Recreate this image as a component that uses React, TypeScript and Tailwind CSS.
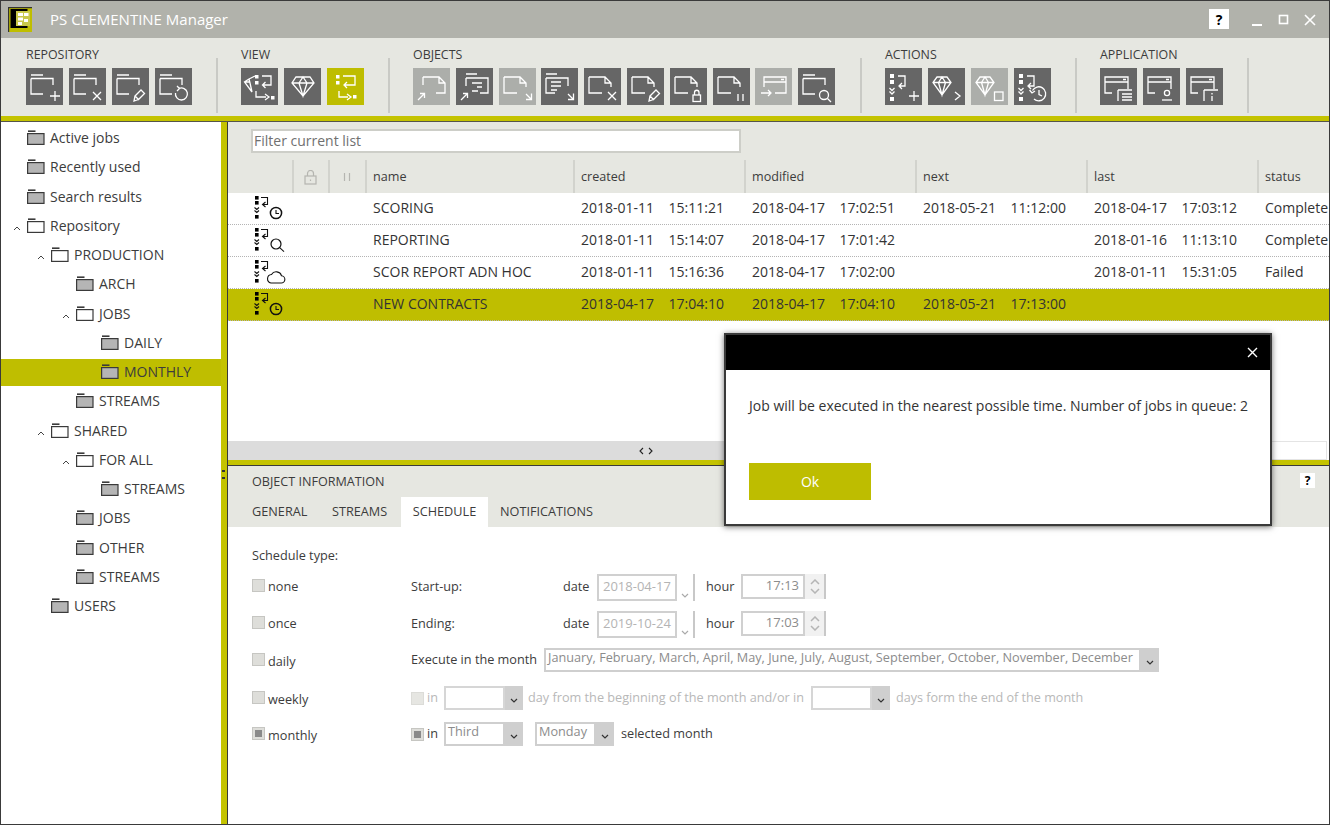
import React from "react";

const FONT = "font-['Open_Sans','Noto_Sans',sans-serif]";

const folderP = "M5 7H17M5 10.5H27V17M5 10.5V26H17";
const docP = "M5 9H21L27 15V19M5 9V25H18M21 9V15H27";
const docP2 = "M10 9H26L32 15V25H23M10 9V17M26 9V15H32";
const folderLines = "M10 6H21M10 10H32V25H24M10 10V18M16 15H26M21 19H26M16 23H22";
const folderLinesL = "M5 6H16M5 10H27V18M5 10V25H14M10 14H20M10 18H20M10 22H16";
const plus = "M29 23V33M24 28H34";
const cross = "M24 24L32 32M32 24L24 32";
const pencil = "M23 28L29 22L32.5 25.5L26.5 31.5ZM23 28L22 33L26.5 31.5";
const search = "M29.5 30.5L33 34";
const ne = "M5 32L11 26M7 25.5H11.5V30";
const se = "M27 26L32 31M32.5 25.5V31.5H27";
const flow = "M16 8H28V17H18M20 14L17 17L20 20M12 23V29H21M20 26L24 29L20 32";
const flowSmall = "M13 8H20V18H15M17 15L14 18L17 21M4.5 20L7 22.5L9.5 20M4.5 23.5L7 26L9.5 23.5";
const diamond = "M12 9H26L30 15L19 28L8 15ZM8 15H30M15 15L19 28L23 15M15 15L19 9L23 15";
const diamondS = "M9 9H19L23 14.5L14 27L5 14.5ZM5 14.5H23M10.5 14.5L14 27L17.5 14.5M10.5 14.5L14 9L17.5 14.5";
const win = "M5 9H28V14H5ZM23 11.5H26M5 14V25H12M28 14V21";

function Sq({ x, y, s = 3.5, fill = "white" }: { x: number; y: number; s?: number; fill?: string }) {
  return <rect x={x} y={y} width={s} height={s} fill={fill} stroke="none" />;
}

const flowSquares = (
  <>
    <Sq x={5} y={6} s={4} />
    <Sq x={5} y={12} s={4} />
    <Sq x={5} y={29} s={4} />
  </>
);

type Btn = { tone: "dark" | "light" | "yellow"; el: React.ReactNode };

const repo: Btn[] = [
  { tone: "dark", el: <path d={folderP + plus} /> },
  { tone: "dark", el: <path d={folderP + cross} /> },
  { tone: "dark", el: <path d={folderP + pencil} /> },
  { tone: "dark", el: <><path d={folderP} /><path d="M24 20.5A6 6 0 1 1 20.5 25M22 18L24.5 20.5L22 23" /></> },
];
const view: Btn[] = [
  { tone: "dark", el: <><path d="M8 11L14 8M8 11L3.5 14L11 24M8 11L9 15L11 24M3.5 14H9" /><path d="M21 8H30V17H22M24.5 14L21.5 17L24.5 20M15 23V29H25M24 26L28 29L24 32" /><Sq x={14} y={7} /><Sq x={14} y={13} /><Sq x={30} y={28} /></> },
  { tone: "dark", el: <path d={diamond} /> },
  { tone: "yellow", el: <><path d={flow} /><Sq x={9} y={7} /><Sq x={9} y={13} /><Sq x={26} y={27} /></> },
];
const objects: Btn[] = [
  { tone: "light", el: <path d={docP2 + ne} /> },
  { tone: "dark", el: <path d={folderLines + ne} /> },
  { tone: "light", el: <path d={docP + se} /> },
  { tone: "dark", el: <path d={folderLinesL + se} /> },
  { tone: "dark", el: <path d={docP + cross} /> },
  { tone: "dark", el: <path d={docP + pencil} /> },
  { tone: "dark", el: <><path d={docP} /><rect x="23" y="27" width="7.5" height="6.5" /><path d="M24.5 27V24.5A2.2 2.2 0 0 1 29 24.5V27" /></> },
  { tone: "dark", el: <path d={docP + "M25 26V33M30 26V33"} /> },
  { tone: "light", el: <path d="M9 9H31V14H9ZM26 11.5H29M9 14V19M31 14V25H20M6 25H16M13 22L16 25L13 28" /> },
  { tone: "dark", el: <><path d={folderP + search} /><circle cx="26" cy="27" r="4.5" /></> },
];
const actions: Btn[] = [
  { tone: "dark", el: <>{flowSquares}<path d={flowSmall + plus} /></> },
  { tone: "dark", el: <path d={diamondS + "M27 24L32 28L27 32"} /> },
  { tone: "light", el: <><path d={diamondS} /><rect x="23.5" y="24" width="8.5" height="8.5" /></> },
  { tone: "dark", el: <>{flowSquares}<path d={flowSmall} /><path d="M18.5 22.5A7 7 0 1 1 20 31M15.5 22L18 25L21 23M25 22V26.5L28 28" /></> },
];
const app: Btn[] = [
  { tone: "dark", el: <path d={win + "M18 22V33M18 22H32M22 26H32M22 29H32M22 32H32"} /> },
  { tone: "dark", el: <><path d={win} /><circle cx="24" cy="25" r="2.6" /><path d="M19 32H29" /></> },
  { tone: "dark", el: <path d={win + "M18 22V33M18 22H32M26 25V26.5M26 28V33"} /> },
];

function IconBtn({ tone, el }: Btn) {
  const bg = tone === "dark" ? "bg-[#666666]" : tone === "light" ? "bg-[#acaeaa]" : "bg-[#bebd00]";
  return (
    <div className={`w-[37px] h-[37px] shrink-0 ${bg}`}>
      <svg width="37" height="37" viewBox="0 0 37 37" fill="none" stroke="white" strokeWidth="1.3">
        {el}
      </svg>
    </div>
  );
}

function Group({ title, items, gap, width }: { title: string; items: Btn[]; gap: string; width: string }) {
  return (
    <div className={`flex flex-col ${width} shrink-0`}>
      <div className="h-[18px] text-[12.4px] leading-[18px] text-[#3c3c3c] whitespace-nowrap">{title}</div>
      <div className={`flex mt-[4px] ${gap}`}>
        {items.map((b, i) => (
          <IconBtn key={i} tone={b.tone} el={b.el} />
        ))}
      </div>
    </div>
  );
}

const Sep = () => <div className="w-[2px] h-[55px] mt-[12px] bg-[#c9cac5] mx-[23.5px] shrink-0" />;

function FolderIcon({ open }: { open: boolean }) {
  return (
    <svg width="18" height="15" viewBox="0 0 18 15" className="shrink-0" fill="none" stroke="#3a3a3a" strokeWidth="1.2">
      <path d="M1 1.2H8.5" strokeWidth="1.6" />
      <rect x="0.6" y="3.6" width="16.4" height="10.8" fill={open ? "white" : "#b5b5b5"} />
    </svg>
  );
}

const tree: { t: string; lvl: number; chev?: boolean; open?: boolean; sel?: boolean }[] = [
  { t: "Active jobs", lvl: 0 },
  { t: "Recently used", lvl: 0 },
  { t: "Search results", lvl: 0 },
  { t: "Repository", lvl: 0, chev: true, open: true },
  { t: "PRODUCTION", lvl: 1, chev: true, open: true },
  { t: "ARCH", lvl: 2 },
  { t: "JOBS", lvl: 2, chev: true, open: true },
  { t: "DAILY", lvl: 3 },
  { t: "MONTHLY", lvl: 3, sel: true },
  { t: "STREAMS", lvl: 2 },
  { t: "SHARED", lvl: 1, chev: true, open: true },
  { t: "FOR ALL", lvl: 2, chev: true, open: true },
  { t: "STREAMS", lvl: 3 },
  { t: "JOBS", lvl: 2 },
  { t: "OTHER", lvl: 2 },
  { t: "STREAMS", lvl: 2 },
  { t: "USERS", lvl: 1 },
];

const lvlPad = ["pl-[26px]", "pl-[50px]", "pl-[75px]", "pl-[100px]"];

function TreeRow({ t, lvl, chev, open, sel }: (typeof tree)[number]) {
  return (
    <div className={`relative flex items-center h-[27px] mb-[2.25px] pb-[2px] ${lvlPad[lvl]} ${sel ? "bg-[#bfbe00]" : ""}`}>
      {chev && (
        <svg width="8" height="5" viewBox="0 0 8 5" className="absolute top-[13px] -ml-[14px]" fill="none" stroke="#444" strokeWidth="1">
          <path d="M1 4L4 1L7 4" />
        </svg>
      )}
      <FolderIcon open={!!open} />
      <span className="ml-[5px] text-[14px] text-[#3c3c3c] whitespace-nowrap">{t}</span>
    </div>
  );
}

function JobIcon({ kind }: { kind: "clock" | "search" | "cloud" }) {
  return (
    <svg width="33" height="29" viewBox="0 0 33 29" fill="none" stroke="#111" strokeWidth="1.1">
      <Sq x={2} y={2} s={3.6} fill="#000" />
      <Sq x={2} y={7} s={3.6} fill="#000" />
      <Sq x={2} y={21} s={3.6} fill="#000" />
      <path d="M8 3.5H14.5V10.5H10M12.5 8L9.5 10.5L12.5 13M1.5 13.5L3.8 15.5L6 13.5M1.5 16.5L3.8 18.5L6 16.5" />
      {kind === "clock" && (
        <>
          <circle cx="23" cy="19" r="5.6" strokeWidth="1.5" />
          <path d="M23 16V19.5H26" />
        </>
      )}
      {kind === "search" && (
        <>
          <circle cx="23" cy="18" r="5" strokeWidth="1.2" />
          <path d="M26.7 21.7L31 25.7" />
        </>
      )}
      {kind === "cloud" && (
        <path d="M18 25H28A3.6 3.6 0 0 0 28.5 17.8A5.5 5.5 0 0 0 18.5 16.5A4.3 4.3 0 0 0 18 25Z" />
      )}
    </svg>
  );
}

const colGrid = "grid grid-cols-[64px_36px_37px_208px_171px_171px_171px_171px_73px]";

const rows = [
  { k: "clock" as const, n: "SCORING", c: ["2018-01-11", "15:11:21"], m: ["2018-04-17", "17:02:51"], nx: ["2018-05-21", "11:12:00"], l: ["2018-04-17", "17:03:12"], s: "Complete" },
  { k: "search" as const, n: "REPORTING", c: ["2018-01-11", "15:14:07"], m: ["2018-04-17", "17:01:42"], nx: null, l: ["2018-01-16", "11:13:10"], s: "Complete" },
  { k: "cloud" as const, n: "SCOR REPORT ADN HOC", c: ["2018-01-11", "15:16:36"], m: ["2018-04-17", "17:02:00"], nx: null, l: ["2018-01-11", "15:31:05"], s: "Failed" },
  { k: "clock" as const, n: "NEW CONTRACTS", c: ["2018-04-17", "17:04:10"], m: ["2018-04-17", "17:04:10"], nx: ["2018-05-21", "17:13:00"], l: null, s: "", sel: true },
];

function DT({ v }: { v: string[] | null }) {
  return (
    <div className="pl-[8px] flex whitespace-nowrap">
      {v && (
        <>
          <span className="w-[87.5px]">{v[0]}</span>
          <span>{v[1]}</span>
        </>
      )}
    </div>
  );
}

function HeadCell({ children }: { children?: React.ReactNode }) {
  return (
    <div className="h-[33px] border-l-2 border-[#d2d3cd] pl-[6px] pt-[1px] flex items-center text-[12.6px] text-[#3c3c3c] whitespace-nowrap overflow-hidden">
      {children}
    </div>
  );
}

function Check({ on, faint }: { on?: boolean; faint?: boolean }) {
  return (
    <div className={`w-[13px] h-[13px] shrink-0 flex items-center justify-center border ${faint ? "border-[#dcdcd8] bg-[#e6e6e2]" : "border-[#c6c6c2] bg-[#dededa]"}`}>
      {on && <div className="w-[7px] h-[7px] bg-[#8a8a8a]" />}
    </div>
  );
}

function Chev({ color = "#333" }: { color?: string }) {
  return (
    <svg width="8" height="5" viewBox="0 0 8 5" fill="none" stroke={color} strokeWidth="1.2">
      <path d="M1 1L4 4L7 1" />
    </svg>
  );
}

function Select({ w, h = "h-[24px]", text, faint }: { w: string; h?: string; text?: string; faint?: boolean }) {
  return (
    <div className={`flex ${w} ${h} shrink-0`}>
      <div className={`flex-1 min-w-0 bg-white border-2 ${faint ? "border-[#d6d6d6]" : "border-[#cfcfcf]"} pl-[2px] text-[12.7px] leading-[15px] text-[#8c8c8c] whitespace-nowrap overflow-hidden`}>
        {text}
      </div>
      <div className="w-[18px] bg-[#cfcfcf] flex items-center justify-center pt-[4px]">
        <Chev />
      </div>
    </div>
  );
}

function DateBox({ v }: { v: string }) {
  return (
    <div className="flex items-start">
      <div className="w-[80px] h-[27px] border-2 border-[#d0d0d0] text-[13px] leading-[21px] text-[#b4b4b4] pl-[4px] whitespace-nowrap overflow-hidden">{v}</div>
      <div className="w-[18px] h-[27px] flex items-end justify-center pb-[3px] border-r-2 border-[#c8c8c8]">
        <Chev color="#aaa" />
      </div>
    </div>
  );
}

function TimeBox({ v }: { v: string }) {
  return (
    <div className="flex items-start self-start h-[25px]">
      <div className="w-[64px] h-[25px] border-2 border-[#d0d0d0] text-[13px] leading-[19px] text-[#8c8c8c] text-right pr-[4px]">{v}</div>
      <div className="w-[21px] h-[25px] bg-[#f1f1f1] border-r-2 border-[#c8c8c8] flex flex-col items-center justify-center gap-[3px]">
        <svg width="10" height="6" viewBox="0 0 10 6" fill="none" stroke="#b5b5b5" strokeWidth="1.5"><path d="M1 5L5 1L9 5" /></svg>
        <svg width="10" height="6" viewBox="0 0 10 6" fill="none" stroke="#b5b5b5" strokeWidth="1.5"><path d="M1 1L5 5L9 1" /></svg>
      </div>
    </div>
  );
}

function TypeLabel({ on, t, low }: { on?: boolean; t: string; low?: boolean }) {
  return (
    <div className="w-[159px] shrink-0 flex items-center gap-[3px] text-[12.7px] text-[#3c3c3c]">
      <Check on={on} />
      <span className={low ? "mt-[4px]" : "mt-[2px]"}>{t}</span>
    </div>
  );
}

function StartRow({ label, date, hour, on, t }: { label: string; date: string; hour: string; on?: boolean; t: string }) {
  return (
    <div className="flex items-center h-[27px]">
      <div className="pb-[3px]"><TypeLabel t={t} on={on} /></div>
      <div className="w-[152px] shrink-0 pb-[2px] text-[12.7px] text-[#3c3c3c]">{label}</div>
      <div className="w-[34px] shrink-0 pb-[2px] text-[12.7px] text-[#3c3c3c]">date</div>
      <DateBox v={date} />
      <div className="w-[46px] shrink-0 pl-[11px] pb-[2px] text-[12.7px] text-[#3c3c3c]">hour</div>
      <TimeBox v={hour} />
    </div>
  );
}

export default function App() {
  return (
    <div className={`relative w-[1330px] h-[825px] overflow-hidden flex flex-col border border-[#3a3a3a] bg-white ${FONT}`}>
      {/* Title bar */}
      <div className="h-[37px] shrink-0 bg-[#b1b2ab] flex items-center pl-[7px]">
        <svg width="25" height="25" viewBox="0 0 25 25" className="shrink-0">
          <rect x="0" y="0" width="24" height="25" fill="#bfbe00" />
          <path d="M0 0.6H24M0.6 0V25" stroke="#333" strokeWidth="1.2" />
          <rect x="2.5" y="2" width="17" height="19" fill="#000" />
          <rect x="8" y="4" width="14" height="15" fill="#c9c84a" />
          <rect x="10" y="6" width="5" height="3" fill="#fff" />
          <rect x="16" y="6" width="4.5" height="3" fill="#fff" />
          <rect x="10" y="10.5" width="5" height="3" fill="#fff" />
          <rect x="16" y="12" width="4" height="3" fill="#fff" />
          <rect x="10" y="15" width="4" height="3" fill="#fff" />
        </svg>
        <div className="ml-[17px] text-[15px] text-white whitespace-nowrap">PS CLEMENTINE Manager</div>
        <div className="flex-1" />
        <div className="w-[20px] h-[20px] bg-white flex items-center justify-center text-[14px] font-bold text-black mt-[-1px]">?</div>
        <div className="w-[23px]" />
        <svg width="68" height="14" viewBox="0 0 68 14" fill="none" stroke="white" strokeWidth="1.6" className="mr-[9px]">
          <path d="M0 12H10" strokeWidth="2" />
          <rect x="27.5" y="2.5" width="8" height="8" />
          <path d="M53 2L63 12M63 2L53 12" />
        </svg>
      </div>

      {/* Toolbar */}
      <div className="h-[78px] shrink-0 bg-[#e6e7e1] flex pl-[25px] pt-[8px]">
        <Group title="REPOSITORY" items={repo} gap="gap-[6px]" width="w-[166px]" />
        <Sep />
        <Group title="VIEW" items={view} gap="gap-[6px]" width="w-[123px]" />
        <Sep />
        <Group title="OBJECTS" items={objects} gap="gap-[5.8px]" width="w-[423px]" />
        <Sep />
        <Group title="ACTIONS" items={actions} gap="gap-[6px]" width="w-[166px]" />
        <Sep />
        <Group title="APPLICATION" items={app} gap="gap-[6px]" width="w-[123px]" />
        <Sep />
      </div>
      <div className="h-[6px] shrink-0 bg-[#c4c300] border-b border-[#55554a]" />

      {/* Body */}
      <div className="flex-1 min-h-0 flex">
        {/* Sidebar */}
        <div className="w-[220px] shrink-0 pt-[3px] bg-white">
          {tree.map((r, i) => (
            <TreeRow key={i} {...r} />
          ))}
        </div>
        <div className="relative w-[7px] shrink-0 bg-[#c4c300] border-r border-[#3a3a3a]">
          <div className="absolute top-[348px] left-[1px] w-[3px] h-[9px] border-y-2 border-[#333]" />
        </div>

        {/* Right */}
        <div className="flex-1 min-w-0 flex flex-col">
          <div className="h-[319px] shrink-0 flex flex-col bg-white">
            <div className="bg-[#e6e7e1] h-[38px] pt-[7px] pl-[23px] shrink-0">
              <div className="w-[490px] h-[24px] bg-white border-2 border-[#cdcec8] text-[14px] leading-[20px] pl-[1px] text-[#707070]">Filter current list</div>
            </div>
            <div className={`${colGrid} bg-[#e6e7e1] shrink-0`}>
              <div className="h-[33px]" />
              <HeadCell>
                <svg width="13" height="15" viewBox="0 0 13 15" fill="none" stroke="#b5b5b0" strokeWidth="1.2" className="ml-[4px]">
                  <rect x="1" y="6" width="11" height="8" />
                  <path d="M3.5 6V3.5A3 3 0 0 1 9.5 3.5V6M6.5 9.5V11" />
                </svg>
              </HeadCell>
              <HeadCell>
                <svg width="8" height="10" viewBox="0 0 8 10" stroke="#b5b5b0" strokeWidth="1.2" className="ml-[7px]">
                  <path d="M1.5 1V9M6.5 1V9" />
                </svg>
              </HeadCell>
              <HeadCell>name</HeadCell>
              <HeadCell>created</HeadCell>
              <HeadCell>modified</HeadCell>
              <HeadCell>next</HeadCell>
              <HeadCell>last</HeadCell>
              <HeadCell>status</HeadCell>
            </div>
            {rows.map((r, i) => (
              <div key={i} className={`${colGrid} h-[32px] shrink-0 items-center border-b border-dotted border-[#b4b4b4] text-[14px] text-[#333] ${r.sel ? "bg-[#bfbe00]" : ""}`}>
                <div className="pl-[25px] h-[31px] flex items-center"><JobIcon kind={r.k} /></div>
                <div />
                <div />
                <div className="pl-[8px] pb-[2px] whitespace-nowrap">{r.n}</div>
                <div className="pb-[2px]"><DT v={r.c} /></div>
                <div className="pb-[2px]"><DT v={r.m} /></div>
                <div className="pb-[2px]"><DT v={r.nx} /></div>
                <div className="pb-[2px]"><DT v={r.l} /></div>
                <div className="pl-[8px] pb-[2px] whitespace-nowrap overflow-hidden">{r.s}</div>
              </div>
            ))}
            <div className="flex-1" />
          </div>
          {/* Scrollbar */}
          <div className="h-[19px] shrink-0 bg-white flex pr-[2px]">
            <div className="w-[836px] bg-[#dcdcdc] flex items-center justify-center">
              <svg width="14" height="8" viewBox="0 0 14 8" fill="none" stroke="#222" strokeWidth="1.1">
                <path d="M4 1L1 4L4 7M10 1L13 4L10 7" />
              </svg>
            </div>
            <div className="flex-1 border border-[#e4e4e4]" />
          </div>
          <div className="h-[6px] shrink-0 bg-[#c4c300] border-b border-[#3a3a3a]" />

          {/* Detail */}
          <div className="relative h-[31px] shrink-0 bg-[#e6e7e1] pl-[24px] pt-[7px] text-[12.6px] text-[#3c3c3c]">
            OBJECT INFORMATION
            <div className="absolute right-[14px] top-[7px] w-[15px] h-[15px] bg-white flex items-center justify-center text-[12px] font-bold text-black">?</div>
          </div>
          <div className="h-[30px] shrink-0 bg-[#e6e7e1] flex pl-[24px] text-[12.7px] text-[#3c3c3c]">
            <div className="w-[80px] pt-[5px]">GENERAL</div>
            <div className="w-[69px] pt-[5px]">STREAMS</div>
            <div className="w-[87px] bg-white pt-[5px] text-center">SCHEDULE</div>
            <div className="pl-[12px] pt-[5px]">NOTIFICATIONS</div>
          </div>
          <div className="flex-1 min-h-0 bg-white pl-[24px] pt-[18px] flex flex-col">
            <div className="h-[20px] text-[12.7px] leading-[20px] text-[#3c3c3c]">Schedule type:</div>
            <div className="mt-[9px]">
              <StartRow t="none" label="Start-up:" date="2018-04-17" hour="17:13" />
            </div>
            <div className="mt-[10px]">
              <StartRow t="once" label="Ending:" date="2019-10-24" hour="17:03" />
            </div>
            <div className="mt-[10px] flex items-center h-[24px]">
              <TypeLabel t="daily" low />
              <div className="w-[133px] shrink-0 text-[12.7px] text-[#3c3c3c] whitespace-nowrap">Execute in the month</div>
              <Select w="w-[615px]" text="January, February, March, April, May, June, July, August, September, October, November, December" />
            </div>
            <div className="mt-[14px] flex items-center h-[24px]">
              <TypeLabel t="weekly" low />
              <Check faint />
              <span className="ml-[3px] w-[17px] text-[12.7px] text-[#b8b8b8]">in</span>
              <Select w="w-[79px]" faint />
              <span className="ml-[5px] w-[283px] shrink-0 text-[12.7px] text-[#b8b8b8] whitespace-nowrap">day from the beginning of the month and/or in</span>
              <Select w="w-[79px]" faint />
              <span className="ml-[6px] text-[12.6px] text-[#b8b8b8] whitespace-nowrap">days form the end of the month</span>
            </div>
            <div className="mt-[12px] flex items-center h-[24px]">
              <TypeLabel t="monthly" on low />
              <Check on />
              <span className="ml-[3px] w-[17px] text-[12.7px] text-[#3c3c3c]">in</span>
              <Select w="w-[79px]" text="Third" />
              <span className="w-[12px]" />
              <Select w="w-[79px]" text="Monday" />
              <span className="ml-[7px] text-[12.7px] text-[#3c3c3c] whitespace-nowrap">selected month</span>
            </div>
          </div>
        </div>
      </div>

      {/* Modal */}
      <div className="absolute left-[723px] top-[332px] w-[548px] h-[193px] bg-white border-2 border-[#3a3a3a] shadow-[0_1px_6px_rgba(0,0,0,0.55)] flex flex-col">
        <div className="h-[35px] shrink-0 bg-black flex items-center justify-end pr-[12px]">
          <svg width="11" height="11" viewBox="0 0 11 11" stroke="white" strokeWidth="1.4"><path d="M1 1L10 10M10 1L1 10" /></svg>
        </div>
        <div className="pl-[23px] pt-[26px] h-[93px] text-[14px] leading-[20px] text-[#333] whitespace-nowrap">
          Job will be executed in the nearest possible time. Number of jobs in queue: 2
        </div>
        <div className="ml-[23px] w-[122px] h-[37px] bg-[#bebd00] flex items-center justify-center text-white text-[14px]">Ok</div>
      </div>
    </div>
  );
}
